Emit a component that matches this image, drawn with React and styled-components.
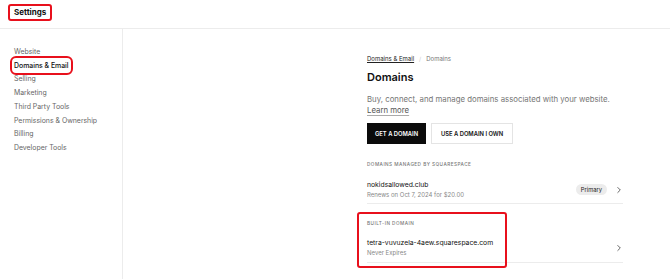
import React from 'react';
import styled, { createGlobalStyle } from 'styled-components';

const GlobalStyle = createGlobalStyle`
  html, body {
    margin: 0;
    padding: 0;
    background: #fff;
    font-family: Inter, "Liberation Sans", sans-serif;
    color: #111;
  }
`;

const navItems = [
  'Website',
  'Domains & Email',
  'Selling',
  'Marketing',
  'Third Party Tools',
  'Permissions & Ownership',
  'Billing',
  'Developer Tools',
];

const ChevronRight = () => (
  <svg width="8" height="8" viewBox="0 0 8 8" fill="none">
    <path d="M2.8 1.5 L5.3 4 L2.8 6.5" stroke="#555" strokeWidth="0.9" strokeLinecap="round" strokeLinejoin="round" />
  </svg>
);

const DomainRow = ({ name, meta, badge, tight }) => (
  <Row tight={tight}>
    <RowText>
      <RowName>{name}</RowName>
      <RowMeta>{meta}</RowMeta>
    </RowText>
    <RowRight>
      {badge && <Badge>{badge}</Badge>}
      <ChevronRight />
    </RowRight>
  </Row>
);

const App = () => (
  <>
    <GlobalStyle />
    <Page>
      <Header>
        <HeaderTitle>Settings</HeaderTitle>
      </Header>
      <Body>
        <Sidebar>
          {navItems.map((item) => (
            <NavItem key={item} active={item === 'Domains & Email'}>
              {item}
            </NavItem>
          ))}
        </Sidebar>
        <Main>
          <Content>
            <Breadcrumb>
              <CrumbLink>Domains &amp; Email</CrumbLink>
              <CrumbSep>/</CrumbSep>
              <span>Domains</span>
            </Breadcrumb>
            <Title>Domains</Title>
            <Description>
              Buy, connect, and manage domains associated with your website.
              <br />
              <LearnMore>Learn more</LearnMore>
            </Description>
            <Buttons>
              <Button primary>GET A DOMAIN</Button>
              <Button>USE A DOMAIN I OWN</Button>
            </Buttons>
            <Section>
              <SectionLabel>DOMAINS MANAGED BY SQUARESPACE</SectionLabel>
              <DomainRow name="nokidsallowed.club" meta="Renews on Oct 7, 2024 for $20.00" badge="Primary" />
            </Section>
            <Section highlighted>
              <SectionLabel>BUILT-IN DOMAIN</SectionLabel>
              <DomainRow tight name="tetra-vuvuzela-4aew.squarespace.com" meta="Never Expires" />
            </Section>
          </Content>
        </Main>
      </Body>
    </Page>
  </>
);

const Page = styled.div`
  width: 670px;
  height: 279px;
  display: flex;
  flex-direction: column;
  overflow: hidden;
`;

const Header = styled.header`
  height: 29px;
  flex-shrink: 0;
  display: flex;
  align-items: flex-start;
  padding: 4px 0 0 8px;
  border-bottom: 1px solid #ececec;
  box-sizing: border-box;
`;

const HeaderTitle = styled.div`
  font-size: 8px;
  line-height: 13px;
  font-weight: 700;
  padding: 0 4px;
  border: 2px solid #e8101c;
  border-radius: 3px;
`;

const Body = styled.div`
  flex: 1;
  display: flex;
`;

const Sidebar = styled.nav`
  width: 123px;
  flex-shrink: 0;
  border-right: 1px solid #ececec;
  padding: 16px 0 0 14px;
  box-sizing: border-box;
  display: flex;
  flex-direction: column;
  align-items: flex-start;
`;

const NavItem = styled.div`
  font-size: 6.9px;
  line-height: 13.7px;
  padding: 0 1px;
  margin-left: -1px;
  color: ${(props) => (props.active ? '#111' : '#666')};
  font-weight: ${(props) => (props.active ? 500 : 400)};
  border-radius: 3px;
  outline: ${(props) => (props.active ? '2px solid #e8101c' : 'none')};
  outline-offset: 1px;
`;

const Main = styled.main`
  flex: 1;
  padding: 26px 0 0 244px;
  box-sizing: border-box;
`;

const Content = styled.div`
  width: 256px;
`;

const Breadcrumb = styled.div`
  display: flex;
  align-items: center;
  font-size: 6px;
  line-height: 8px;
  color: #777;
`;

const CrumbLink = styled.span`
  color: #222;
  text-decoration: underline;
`;

const CrumbSep = styled.span`
  color: #ccc;
  margin: 0 5px;
`;

const Title = styled.h1`
  font-size: 11px;
  font-weight: 600;
  margin: 7px 0 0;
  line-height: 14px;
`;

const Description = styled.p`
  font-size: 7.8px;
  color: #767676;
  margin: 9.5px 0 0;
  line-height: 11px;
`;

const LearnMore = styled.span`
  color: #555;
  text-decoration: underline;
  text-decoration-color: #aaa;
  text-underline-offset: 2px;
`;

const Buttons = styled.div`
  display: flex;
  gap: 5px;
  margin-top: 7.5px;
`;

const Button = styled.button`
  height: 21px;
  padding: 0 ${(props) => (props.primary ? '7px' : '9px')};
  font-family: inherit;
  font-size: 5.8px;
  font-weight: 600;
  color: ${(props) => (props.primary ? '#fff' : '#111')};
  background: ${(props) => (props.primary ? '#0b0b0b' : '#fff')};
  border: 1px solid ${(props) => (props.primary ? '#0b0b0b' : '#e4e4e4')};
  border-radius: 0;
`;

const Section = styled.section`
  position: relative;
  margin-top: ${(props) => (props.highlighted ? '16px' : '17px')};

  &::before {
    content: '';
    display: ${(props) => (props.highlighted ? 'block' : 'none')};
    position: absolute;
    top: -8px;
    left: -10px;
    width: 150px;
    height: 56px;
    border: 2px solid #e8101c;
    border-radius: 3px;
    box-sizing: border-box;
    pointer-events: none;
  }
`;

const SectionLabel = styled.div`
  font-size: 4.7px;
  line-height: 6px;
  letter-spacing: 0.45px;
  color: #777;
  font-weight: 500;
`;

const Row = styled.div`
  width: 256px;
  display: flex;
  align-items: center;
  justify-content: space-between;
  padding: ${(props) => (props.tight ? '12px 0 5px' : '13px 0 4px')};
  border-bottom: 1px solid #ececec;
`;

const RowText = styled.div`
  display: flex;
  flex-direction: column;
  gap: 1px;
`;

const RowName = styled.div`
  font-size: 6.8px;
  color: #111;
  line-height: 10px;
`;

const RowMeta = styled.div`
  font-size: 6px;
  color: #888;
  line-height: 8px;
`;

const RowRight = styled.div`
  display: flex;
  align-items: center;
  gap: 8px;
`;

const Badge = styled.span`
  font-size: 5.8px;
  line-height: 7px;
  padding: 2px 5px;
  border-radius: 8px;
  background: #ececec;
  color: #222;
`;

export default App;
